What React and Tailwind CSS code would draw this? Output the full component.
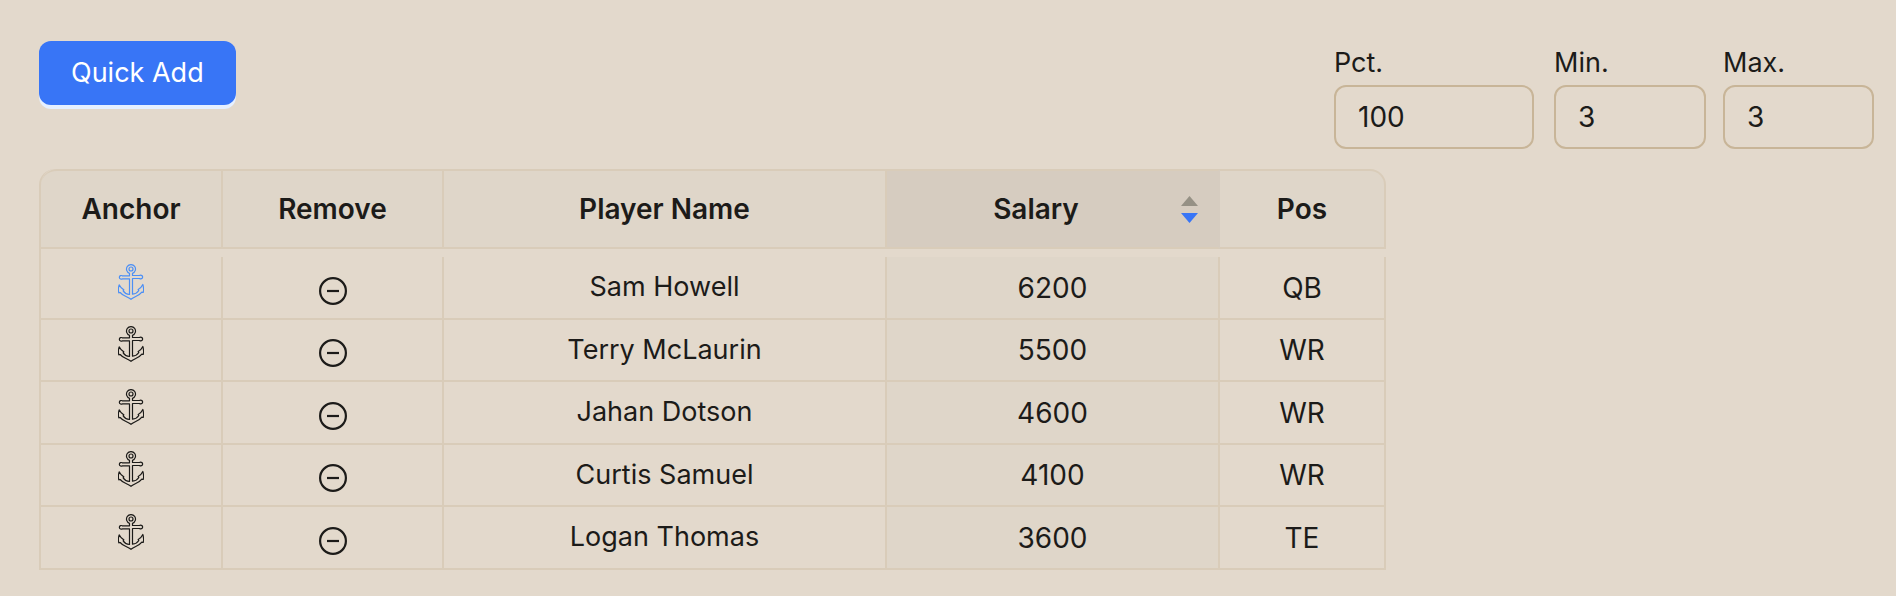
const players = [
  { name: "Sam Howell", salary: 6200, pos: "QB", anchored: true },
  { name: "Terry McLaurin", salary: 5500, pos: "WR" },
  { name: "Jahan Dotson", salary: 4600, pos: "WR" },
  { name: "Curtis Samuel", salary: 4100, pos: "WR" },
  { name: "Logan Thomas", salary: 3600, pos: "TE" },
];

const columns = ["Anchor", "Remove", "Player Name", "Salary", "Pos"];

function AnchorIcon() {
  return (
    <svg viewBox="0 0 78 108" className="h-9 w-[26px]" fill="none" stroke="currentColor" strokeWidth="3.6" strokeLinejoin="round" aria-hidden="true">
      <circle cx="39" cy="15" r="6" />
      <path d="M34.500 28a13.500 13.500 0 1 1 9 0v6.500H65c2-2 9-1 9 4.500s-7 6.500-9 4.500H43.500v47c9-1 16-6 19-11l-2-3c7-3 11-9 14-15 2 7 3 14 2 20l-1 4-4-1C63 96 50 97 39 106 28 97 15 96 6.500 85.500l-4 1-1-4c-1-6 0-13 2-20 3 6 7 12 14 15l-2 3c3 5 10 10 19 11v-47H13c-2 2-9 1-9-4.500s7-6.500 9-4.500h21.500z" />
    </svg>
  );
}

function MinusCircleIcon() {
  return (
    <svg viewBox="0 0 28 28" className="size-7" fill="none" stroke="currentColor" strokeWidth="2.2" aria-hidden="true">
      <circle cx="14" cy="14" r="12.9" />
      <path d="M8 14h12" />
    </svg>
  );
}

function NumberField({ id, label, value, className }) {
  return (
    <div className={className}>
      <label htmlFor={id} className="block text-[27px] leading-11">{label}</label>
      <input
        id={id}
        type="text"
        inputMode="numeric"
        defaultValue={value}
        className="h-16 w-full rounded-xl border-2 border-[#c8b598] bg-transparent px-[22px] outline-none focus:border-[#3875f6]"
      />
    </div>
  );
}

export default function App() {
  return (
    <main className="min-h-screen bg-[#e3d9cc] pt-[41px] pr-[22px] pb-6 pl-[39px] font-['Inter','Liberation_Sans',sans-serif] text-[28px] text-[#1c1b19]">
      <div className="flex items-start justify-between">
        <button type="button" className="h-16 rounded-xl bg-[#3875f6] px-8 text-[27px] text-white shadow-[0_4px_0_#e6f0ff]">
          Quick Add
        </button>
        <div className="flex">
          <NumberField id="pct" label="Pct." value="100" className="mr-5 w-[200px]" />
          <NumberField id="min" label="Min." value="3" className="mr-[17px] w-[152px]" />
          <NumberField id="max" label="Max." value="3" className="w-[151px]" />
        </div>
      </div>

      <div className="mt-5 w-[1347px] max-w-full rounded-tl-2xl border-l-2 border-[#d9ccb9]">
        <table className="w-full table-fixed border-separate border-spacing-0 text-center">
          <colgroup>
            <col className="w-[182px]" />
            <col className="w-[221px]" />
            <col className="w-[443px]" />
            <col className="w-[333px]" />
            <col className="w-[166px]" />
          </colgroup>
          <thead>
            <tr className="h-20">
              {columns.map((title) => (
                <th
                  key={title}
                  scope="col"
                  aria-sort={title === "Salary" ? "descending" : undefined}
                  className="border-t-2 border-r-2 border-b-2 border-[#d9ccb9] bg-[#dfd6c9] p-0 font-semibold first:rounded-tl-2xl last:rounded-tr-2xl aria-[sort=descending]:border-r-[#d6ccc0] aria-[sort=descending]:bg-[#d6ccc0]"
                >
                  {title === "Salary" ? (
                    <button type="button" className="flex w-full items-center gap-4 px-5">
                      <span className="flex-1">Salary</span>
                      <svg viewBox="0 0 17 27" className="h-[27px] w-[17px]" aria-hidden="true">
                        <path d="M8.500 0l8.500 10H0z" fill="#969185" />
                        <path d="M0 17h17L8.500 27z" fill="#3875f6" />
                      </svg>
                    </button>
                  ) : (
                    title
                  )}
                </th>
              ))}
            </tr>
            <tr className="h-2" aria-hidden="true">
              <td colSpan={5} className="p-0" />
            </tr>
          </thead>
          <tbody className="[&_td]:border-r-2 [&_td]:border-b-2 [&_td]:border-[#d9ccb9] [&_td]:p-0">
            {players.map((player) => (
              <tr key={player.name} className="odd:h-[63px] even:h-[62px]">
                <td>
                  <button
                    type="button"
                    aria-label={`Anchor ${player.name}`}
                    aria-pressed={Boolean(player.anchored)}
                    className="block w-full pb-3 aria-pressed:text-[#4c8ff5]"
                  >
                    <span className="flex justify-center"><AnchorIcon /></span>
                  </button>
                </td>
                <td>
                  <button type="button" aria-label={`Remove ${player.name}`} className="block w-full pt-1.5">
                    <span className="flex justify-center"><MinusCircleIcon /></span>
                  </button>
                </td>
                <td className="text-[27px]">{player.name}</td>
                <td className="bg-[#dfd6c9]">{player.salary}</td>
                <td>{player.pos}</td>
              </tr>
            ))}
          </tbody>
        </table>
      </div>
    </main>
  );
}
